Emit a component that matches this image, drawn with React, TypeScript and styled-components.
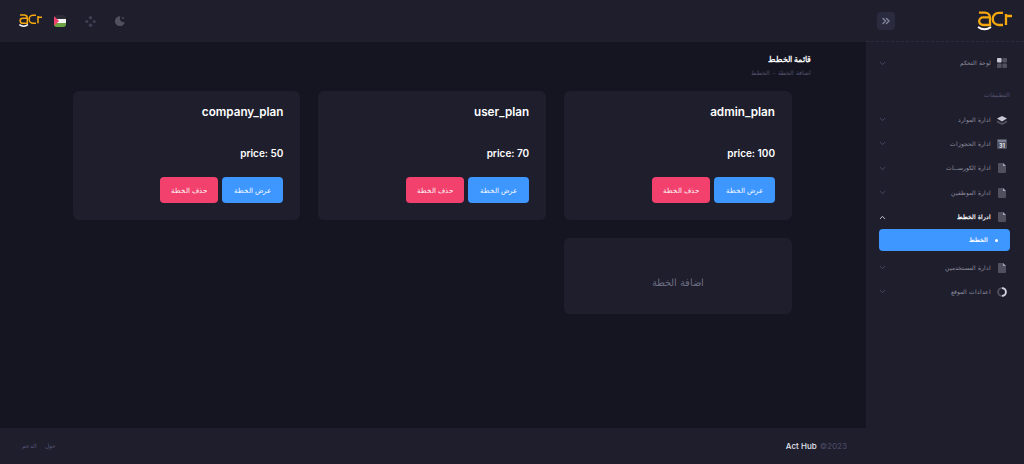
import React from "react";
import styled, { createGlobalStyle } from "styled-components";
import { ChevronDown, ChevronUp, ChevronsRight } from "lucide-react";

const Global = createGlobalStyle`
  html, body { margin: 0; padding: 0; height: 100%; background: #151521; }
  #root { height: 464px; }
  * { box-sizing: border-box; }
  body { font-family: Inter, "Liberation Sans", sans-serif; }
`;

const Shell = styled.div`
  direction: rtl;
  display: flex;
  width: 1024px;
  height: 464px;
  overflow: hidden;
`;
const Sidebar = styled.aside`
  width: 158px;
  flex: none;
  background: #1e1e2d;
  display: flex;
  flex-direction: column;
`;
const Brand = styled.div`
  height: 42px;
  flex: none;
  display: flex;
  align-items: center;
  justify-content: space-between;
  padding: 0 12px 0 11px;
  border-bottom: 1px dashed #2b2b40;
`;
const Collapse = styled.button`
  width: 18px;
  height: 18px;
  padding: 0;
  border: 0;
  border-radius: 4px;
  background: #2b2b40;
  color: #7e8299;
  display: flex;
  align-items: center;
  justify-content: center;
`;
const Menu = styled.nav`
  padding: 9px 0 0 0;
  display: flex;
  flex-direction: column;
`;
const Row = styled.div<{ $open?: boolean }>`
  height: 24.4px;
  display: flex;
  align-items: center;
  padding: 0 17px 0 12px;
  gap: 6px;
  color: ${(p) => (p.$open ? "#ffffff" : "#92929f")};
  font-size: 6.4px;
  font-weight: ${(p) => (p.$open ? 700 : 400)};
`;
const IconBox = styled.span`
  width: 10px;
  height: 11px;
  flex: none;
  display: flex;
  align-items: center;
  justify-content: center;
`;
const RowLabel = styled.span`
  flex: 1;
  white-space: nowrap;
`;
const Section = styled.div`
  margin: 12px 14px 0 0;
  height: 20px;
  line-height: 16px;
  color: #565674;
  font-size: 5.6px;
`;
const SubItem = styled.div`
  margin: 0 14px 4px 13px;
  height: 22px;
  border-radius: 4px;
  background: #3e97ff;
  color: #fff;
  display: flex;
  align-items: center;
  gap: 7px;
  padding-right: 12px;
  font-size: 5.6px;
  font-weight: 700;
`;
const Dot = styled.span`
  width: 3px;
  height: 3px;
  border-radius: 50%;
  background: #fff;
`;
const Main = styled.div`
  flex: 1;
  min-width: 0;
  display: flex;
  flex-direction: column;
`;
const Header = styled.header`
  height: 42px;
  flex: none;
  background: #1e1e2d;
  display: flex;
  align-items: center;
  justify-content: flex-end;
  padding-left: 18px;
`;
const HeaderIcons = styled.div`
  display: flex;
  align-items: center;
  gap: 19px;
  margin-left: 12px;
`;
const Content = styled.main`
  flex: 1;
  padding: 10px 55px 0 73px;
`;
const PageTitle = styled.h1`
  margin: 0;
  height: 14px;
  line-height: 14px;
  color: #fff;
  font-size: 8px;
  font-weight: 700;
`;
const Crumbs = styled.div`
  margin-top: 1px;
  height: 12px;
  line-height: 12px;
  color: #565674;
  font-size: 5.6px;
`;
const Grid = styled.div`
  margin: 12px 19px 0 0;
  display: grid;
  grid-template-columns: repeat(3, 227.8px);
  gap: 18px;
`;
const Card = styled.section`
  height: 129px;
  padding: 12px 17px 17px;
  border-radius: 6px;
  background: #1e1e2d;
  display: flex;
  flex-direction: column;
`;
const CardTitle = styled.h3`
  margin: 0;
  direction: ltr;
  text-align: right;
  color: #fff;
  font-size: 11.7px;
  line-height: 18px;
  font-weight: 600;
`;
const Price = styled.div`
  margin-top: 25px;
  direction: ltr;
  text-align: right;
  color: #fff;
  font-size: 10px;
  line-height: 14px;
  font-weight: 600;
`;
const Actions = styled.div`
  margin-top: auto;
  display: flex;
  gap: 4px;
`;
const Action = styled.button<{ $danger?: boolean }>`
  height: 26px;
  width: ${(p) => (p.$danger ? "58px" : "61px")};
  padding: 0;
  border: 0;
  border-radius: 4px;
  color: #fff;
  background: ${(p) => (p.$danger ? "#f1416c" : "#3e97ff")};
  font-family: inherit;
  font-size: 7px;
`;
const AddCard = styled.section`
  height: 76px;
  border-radius: 6px;
  background: #1e1e2d;
  color: #6d6d80;
  display: flex;
  align-items: center;
  justify-content: center;
  font-size: 9.5px;
  padding-top: 12px;
`;
const Footer = styled.footer`
  height: 36px;
  flex: none;
  background: #1e1e2d;
  display: flex;
  align-items: center;
  justify-content: space-between;
  padding: 0 19px 0 22px;
  font-size: 8px;
`;
const Copy = styled.div`
  direction: ltr;
  display: flex;
  gap: 3px;
  color: #e4e6ef;
  font-weight: 500;
`;
const Year = styled.span`
  color: #474761;
`;
const FootLinks = styled.div`
  display: flex;
  gap: 8px;
  color: #565674;
  font-size: 5.5px;
`;

const Logo = ({ w }: { w: number }) => (
  <svg width={w} height={(w * 20) / 36} viewBox="0 0 36 20" fill="none">
    <path d="M3 1.6 H9 a5 5 0 0 1 5 5 V14 H7 a3.8 3.8 0 0 1 0-7.6 H14" stroke="#f5a90f" strokeWidth="2.3" />
    <path d="M27 1.8 H22.8 a6 6 0 0 0 0 12.2 H27" stroke="#f5a90f" strokeWidth="2.3" />
    <path d="M30 3 V14 M29 5 H36" stroke="#f5a90f" strokeWidth="2.3" />
    <path d="M2 16 Q8.5 20.6 15 16" stroke="#fff" strokeWidth="2" />
  </svg>
);

const DocIcon = () => (
  <svg width="8" height="10" viewBox="0 0 8 10">
    <path d="M0 1 a1 1 0 0 1 1-1 H5 L8 3 V9 a1 1 0 0 1-1 1 H1 a1 1 0 0 1-1-1 Z" fill="#50505f" />
    <path d="M5 0 L8 3 H5 Z" fill="#a1a5b7" />
  </svg>
);
const GridIcon = () => (
  <svg width="10" height="10" viewBox="0 0 10 10">
    <rect width="4.6" height="4.6" rx="1" fill="#c8c8d4" />
    <rect x="5.4" width="4.6" height="4.6" rx="1" fill="#50505f" />
    <rect y="5.4" width="4.6" height="4.6" rx="1" fill="#50505f" />
    <rect x="5.4" y="5.4" width="4.6" height="4.6" rx="1" fill="#50505f" />
  </svg>
);
const LayersIcon = () => (
  <svg width="10" height="10" viewBox="0 0 10 10">
    <path d="M0 5.5 L5 8 L10 5.5 V7.5 L5 10 L0 7.5 Z" fill="#50505f" />
    <path d="M5 1 L10 3.6 L5 6.4 L0 3.6 Z" fill="#c8c8d4" />
  </svg>
);
const CalendarIcon = () => (
  <svg width="10" height="10" viewBox="0 0 10 10">
    <rect width="10" height="10" rx="1" fill="#50505f" />
    <rect x="1" y="1" width="8" height="2" fill="#7e8299" />
    <text x="5" y="8.8" textAnchor="middle" fontSize="5.5" fontWeight="700" fill="#e4e6ef" fontFamily="Inter">31</text>
  </svg>
);
const PieIcon = () => (
  <svg width="10" height="10" viewBox="0 0 10 10" fill="none">
    <circle cx="5" cy="5" r="3.9" stroke="#50505f" strokeWidth="1.8" />
    <path d="M5 1.1 A3.9 3.9 0 0 1 5 8.9" stroke="#d5d5e0" strokeWidth="1.8" />
  </svg>
);
const Flag = () => (
  <svg width="12" height="12" viewBox="0 0 13 13">
    <defs>
      <clipPath id="flagClip"><rect width="13" height="13" rx="3" /></clipPath>
    </defs>
    <g clipPath="url(#flagClip)">
      <rect width="13" height="4.3" fill="#2b2b35" />
      <rect y="4.3" width="13" height="4.4" fill="#f5f5f5" />
      <rect y="8.7" width="13" height="4.3" fill="#6da544" />
      <path d="M0 1 L5.5 6.5 L0 12 Z" fill="#f1416c" />
    </g>
  </svg>
);
const Dots = () => (
  <svg width="11" height="11" viewBox="0 0 11 11" fill="#3f3f52">
    <circle cx="5.5" cy="1.8" r="1.8" />
    <circle cx="5.5" cy="9.2" r="1.8" />
    <circle cx="1.8" cy="5.5" r="1.5" />
    <circle cx="9.2" cy="5.5" r="1.5" />
  </svg>
);
const Moon = () => (
  <svg width="10" height="10" viewBox="0 0 10 10">
    <path d="M5.5 0.2 A5 5 0 1 0 9.8 6.2 A4 4 0 0 1 5.5 0.2 Z" fill="#50505f" />
    <circle cx="8" cy="2" r="0.9" fill="#50505f" />
  </svg>
);

const items = [
  { label: "ادارة الموارد", icon: <LayersIcon /> },
  { label: "ادارة الحجوزات", icon: <CalendarIcon /> },
  { label: "ادارة الكورســات", icon: <DocIcon /> },
  { label: "ادارة الموظفين", icon: <DocIcon /> },
];
const plans = [
  { name: "admin_plan", price: 100 },
  { name: "user_plan", price: 70 },
  { name: "company_plan", price: 50 },
];
const Chevron = () => <ChevronDown size={9} color="#565674" strokeWidth={2} />;

export default function App() {
  return (
    <Shell>
      <Global />
      <Sidebar>
        <Brand>
          <Logo w={36} />
          <Collapse><ChevronsRight size={12} strokeWidth={3} /></Collapse>
        </Brand>
        <Menu>
          <Row><IconBox><GridIcon /></IconBox><RowLabel>لوحة التحكم</RowLabel><Chevron /></Row>
          <Section>التطبيقات</Section>
          {items.map((i) => (
            <Row key={i.label}><IconBox>{i.icon}</IconBox><RowLabel>{i.label}</RowLabel><Chevron /></Row>
          ))}
          <Row $open><IconBox><DocIcon /></IconBox><RowLabel>ادراة الخطط</RowLabel><ChevronUp size={9} color="#fff" strokeWidth={2} /></Row>
          <SubItem><Dot />الخطط</SubItem>
          <Row><IconBox><DocIcon /></IconBox><RowLabel>ادارة المستخدمين</RowLabel><Chevron /></Row>
          <Row><IconBox><PieIcon /></IconBox><RowLabel>اعدادات الموقع</RowLabel><Chevron /></Row>
        </Menu>
      </Sidebar>
      <Main>
        <Header>
          <HeaderIcons>
            <Moon />
            <Dots />
            <Flag />
          </HeaderIcons>
          <Logo w={24} />
        </Header>
        <Content>
          <PageTitle>قائمة الخطط</PageTitle>
          <Crumbs>اضافة الخطة &nbsp;-&nbsp; الخطط</Crumbs>
          <Grid>
            {plans.map((p) => (
              <Card key={p.name}>
                <CardTitle>{p.name}</CardTitle>
                <Price>price: {p.price}</Price>
                <Actions>
                  <Action>عرض الخطة</Action>
                  <Action $danger>حذف الخطة</Action>
                </Actions>
              </Card>
            ))}
            <AddCard>اضافة الخطة</AddCard>
          </Grid>
        </Content>
        <Footer>
          <Copy>Act Hub <Year>©2023</Year></Copy>
          <FootLinks><span>حول</span><span>الدعم</span></FootLinks>
        </Footer>
      </Main>
    </Shell>
  );
}
